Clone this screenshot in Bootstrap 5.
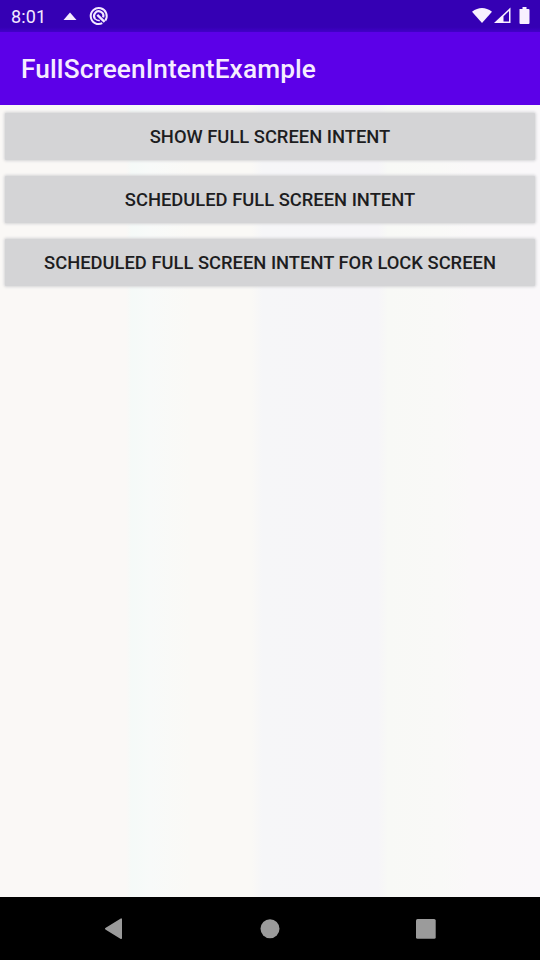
<!DOCTYPE html>
<html lang="en">
<head>
<meta charset="utf-8">
<meta name="viewport" content="width=device-width, initial-scale=1">
<title>FullScreenIntentExample</title>
<link href="https://cdn.jsdelivr.net/npm/bootstrap@5.3.0/dist/css/bootstrap.min.css" rel="stylesheet">
<style>
body { font-family: Roboto, sans-serif; background: #f9f8f9; }
.status-bar { height: 32px; padding: 0 9px 0 11px; background: linear-gradient(#3500b4 85%, #4200c8); color: #f3e9ff; font-size: 18px; }
.clock { letter-spacing: .15px; }
.app-bar { height: 73px; padding: 2px 21px 0; background: #5c00e8; }
.app-title { font-size: 26.25px; font-weight: 500; line-height: 1; letter-spacing: .12px; color: #f6ecff; }
.screen { background: linear-gradient(90deg, #faf8f6 0, #faf8f6 126px, #f5faf8 132px, #f8faf9 150px, #faf9f6 190px, #faf9f6 252px, #f6f6f8 262px, #f6f5f8 378px, #f8f9f6 388px, #f9f9f7 440px, #faf8f9 470px, #faf8fa 100%); }
.action-list { padding: 8px 5px; gap: 16px; }
.btn-action { height: 47px; padding: 2px 0 0; border: 0; border-radius: 1px; background: #d4d4d6; color: #1d1d1f; font-size: 18.375px; font-weight: 500; line-height: 1; box-shadow: 0 0 3px 1px #d4d4d6; }
.btn-action:hover { background: #c9c9cc; }
.nav-keys { height: 63px; background: #000; }
.nav-keys .btn { width: 155.5px; line-height: 0; border: 0; padding: 0; }
</style>
<script src="https://cdn.jsdelivr.net/npm/bootstrap@5.3.0/dist/js/bootstrap.bundle.min.js"></script>
</head>
<body class="vh-100 d-flex flex-column overflow-hidden">
<div class="status-bar d-flex align-items-center justify-content-between flex-shrink-0">
  <div class="d-flex align-items-center">
    <span class="clock">8:01</span>
    <svg class="ms-3" width="16" height="20" viewBox="0 0 16 20"><path d="M1.5 14 8 6.5 14.5 14Z" fill="#f6ecff"/></svg>
    <svg class="ms-2" width="24" height="22" viewBox="0 0 24 22" fill="none" stroke="#f3e9ff"><path d="M19.3 15.6A8 8 0 1 0 16.3 18.2" stroke-width="2"/><path d="M9.3 14A4.6 4.6 0 1 1 17.1 12.4" stroke-width="2.2"/><path d="m11.3 9.8 7.3 7" stroke-width="2.4"/><path d="M9.3 14q2 2 4.5 1.5" stroke-width="1.5"/></svg>
  </div>
  <svg width="60" height="22" viewBox="0 0 60 22" fill="#f8f0ff"><path d="M1 6.8Q11-.7 21 6.8L11 18Z"/><path d="M23 18 39.5 2.5V18Z"/><path d="M32.5 11.2 38 6V16.5H32.5Z" fill="#3500b4"/><path d="M48.5 4h3V2h4v2h2q1 0 1 1v13q0 1-1 1h-8q-1 0-1-1Z"/></svg>
</div>
<header class="app-bar d-flex align-items-center flex-shrink-0"><h1 class="app-title mb-0">FullScreenIntentExample</h1></header>
<main class="screen flex-grow-1">
  <div class="action-list d-grid">
    <button type="button" class="btn btn-action">SHOW FULL SCREEN INTENT</button>
    <button type="button" class="btn btn-action">SCHEDULED FULL SCREEN INTENT</button>
    <button type="button" class="btn btn-action">SCHEDULED FULL SCREEN INTENT FOR LOCK SCREEN</button>
  </div>
</main>
<nav class="nav-keys d-flex align-items-center justify-content-center flex-shrink-0">
  <button class="btn" type="button" aria-label="Back"><svg width="22" height="24" viewBox="0 0 22 24"><path d="M1.8 11.7 17.2 2.2V21.2Z" fill="#9b9b9b" stroke="#9b9b9b" stroke-width="1.6" stroke-linejoin="round"/></svg></button>
  <button class="btn" type="button" aria-label="Home"><svg width="20" height="20" viewBox="0 0 20 20"><circle cx="10" cy="9.7" r="9.5" fill="#9b9b9b"/></svg></button>
  <button class="btn" type="button" aria-label="Overview"><svg width="20" height="20" viewBox="0 0 20 20"><rect width="19.7" height="19.7" rx="1.5" fill="#9b9b9b"/></svg></button>
</nav>
</body>
</html>
